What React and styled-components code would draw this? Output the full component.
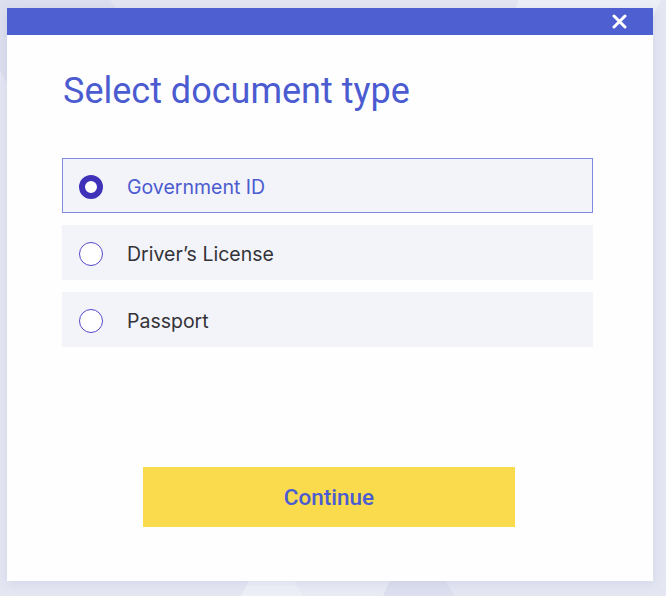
import React, { useState } from 'react';
import styled, { createGlobalStyle } from 'styled-components';

const GlobalStyle = createGlobalStyle`
  html, body {
    margin: 0;
    padding: 0;
  }
  body {
    background-color: #e4e6f2;
    background-image:
      linear-gradient(115deg, transparent 0 55%, rgba(255, 255, 255, 0.35) 55% 70%, transparent 70%),
      linear-gradient(60deg, transparent 0 30%, rgba(210, 213, 233, 0.4) 30% 45%, transparent 45%);
    font-family: Roboto, "Liberation Sans", sans-serif;
    min-height: 596px;
  }
`;

const options = [
  { id: 'gov', label: 'Government ID' },
  { id: 'driver', label: 'Driver\u2019s License' },
  { id: 'passport', label: 'Passport' },
];

const DocumentTypeModal = () => {
  const [selected, setSelected] = useState('gov');

  return (
    <Page>
      <Modal>
        <Header>
          <CloseButton aria-label="Close">
            <svg width="15" height="15" viewBox="0 0 15 15">
              <path d="M2 2 L13 13 M13 2 L2 13" stroke="#fff" strokeWidth="3" strokeLinecap="round" />
            </svg>
          </CloseButton>
        </Header>
        <Body>
          <Title>Select document type</Title>
          <OptionList>
            {options.map((opt) => (
              <Option
                key={opt.id}
                $active={selected === opt.id}
                onClick={() => setSelected(opt.id)}
              >
                <Radio $active={selected === opt.id} />
                <OptionLabel $active={selected === opt.id}>{opt.label}</OptionLabel>
              </Option>
            ))}
          </OptionList>
          <ContinueButton>Continue</ContinueButton>
        </Body>
      </Modal>
    </Page>
  );
};

const Page = styled.div`
  padding: 8px 0 0 7px;
`;

const Modal = styled.div`
  width: 646px;
  height: 573px;
  background: #fefefe;
  box-shadow: 0 2px 10px rgba(90, 100, 170, 0.12);
  display: flex;
  flex-direction: column;
`;

const Header = styled.div`
  height: 27px;
  background: #4e5fd1;
  display: flex;
  align-items: center;
  justify-content: flex-end;
  padding-right: 26px;
`;

const CloseButton = styled.button`
  border: none;
  background: none;
  padding: 0;
  width: 15px;
  height: 15px;
  display: flex;
  cursor: pointer;
`;

const Body = styled.div`
  padding: 0 60px 0 55px;
  display: flex;
  flex-direction: column;
`;

const Title = styled.h1`
  margin: 36px 0 0 1px;
  font-family: Roboto, "Liberation Sans", sans-serif;
  font-weight: 400;
  font-size: 36px;
  line-height: 40px;
  color: #4b5bd0;
`;

const OptionList = styled.div`
  margin-top: 47px;
  display: flex;
  flex-direction: column;
  gap: 12px;
`;

const Option = styled.div`
  box-sizing: border-box;
  height: 55px;
  width: 531px;
  background: #f3f4fa;
  border: 1px solid ${(p) => (p.$active ? '#7f8be0' : 'transparent')};
  display: flex;
  align-items: center;
  padding: 2px 0 0 16px;
  cursor: pointer;
`;

const Radio = styled.span`
  box-sizing: border-box;
  width: 24px;
  height: 24px;
  border-radius: 50%;
  border: ${(p) => (p.$active ? '6px solid #3f32b9' : '1.5px solid #5548cc')};
  background: #fff;
  flex-shrink: 0;
`;

const OptionLabel = styled.span`
  margin-left: 24px;
  font-family: Inter, "Noto Sans", sans-serif;
  font-size: 19.5px;
  color: ${(p) => (p.$active ? '#4b5bd0' : '#333338')};
`;

const ContinueButton = styled.button`
  align-self: flex-start;
  margin: 120px 0 0 81px;
  width: 372px;
  height: 60px;
  border: none;
  background: #fadb4e;
  color: #4b5bd0;
  font-family: Roboto, "Liberation Sans", sans-serif;
  font-weight: 500;
  font-size: 22.5px;
  cursor: pointer;
`;

export default function App() {
  return (
    <>
      <GlobalStyle />
      <DocumentTypeModal />
    </>
  );
}
